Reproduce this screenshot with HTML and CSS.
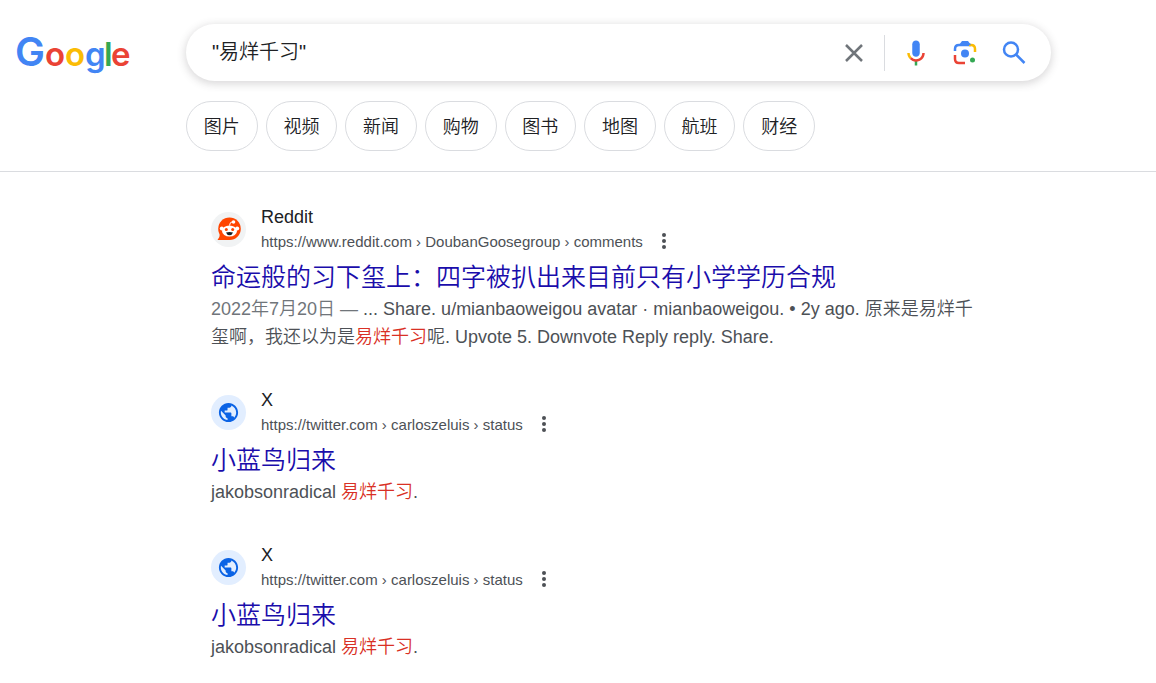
FILE: index.html
```html
<!DOCTYPE html>
<html lang="zh-CN">
<head>
<meta charset="utf-8">
<meta name="viewport" content="width=device-width, initial-scale=1">
<title>"易烊千习" - Google</title>
<link rel="stylesheet" href="styles.css">
</head>
<body>
<svg class="sprite" aria-hidden="true">
  <symbol id="globe" viewBox="0 0 24 24">
    <path fill="#0b63e5" d="M12 2C6.48 2 2 6.48 2 12s4.480 10 10 10 10-4.480 10-10S17.520 2 12 2zm-1 17.930c-3.950-.490-7-3.850-7-7.930 0-.620.080-1.210.210-1.790L9 15v1c0 1.100.900 2 2 2v1.930zm6.900-2.540c-.260-.810-1-1.390-1.900-1.390h-1v-3c0-.550-.450-1-1-1H8v-2h2c.550 0 1-.450 1-1V7h2c1.100 0 2-.900 2-2v-.410c2.930 1.190 5 4.060 5 7.410 0 2.080-.800 3.970-2.100 5.390z"/>
  </symbol>
  <symbol id="dots" viewBox="0 0 6 16">
    <g fill="#4d5156"><circle cx="3" cy="2" r="2"/><circle cx="3" cy="8" r="2"/><circle cx="3" cy="14" r="2"/></g>
  </symbol>
</svg>

<header class="header">
  <div class="topbar">
    <a class="logo" href="#" aria-label="Google">
      <svg class="logo-art" viewBox="0 0 116 60">
        <text y="43"><tspan class="logo-cap blue" x="-1">G</tspan><tspan class="red" x="29">o</tspan><tspan class="yellow" x="49">o</tspan><tspan class="blue" x="69">g</tspan><tspan class="green" x="88">l</tspan><tspan class="red" x="95">e</tspan></text>
      </svg>
    </a>
    <form class="search" role="search">
      <input class="search-input" type="text" aria-label="搜索" value="&quot;易烊千习&quot;">
      <button class="icon-button" type="button" aria-label="清除">
        <svg class="icon" viewBox="0 0 30 30"><path d="M7 7l16 16M23 7L7 23" fill="none" stroke="#70757a" stroke-width="2.500"/></svg>
      </button>
      <span class="divider"></span>
      <button class="icon-button" type="button" aria-label="语音搜索">
        <svg class="icon" viewBox="0 0 24 24">
          <path fill="#4285f4" d="M12 15c1.660 0 3-1.310 3-2.970V5.010C15 3.340 13.660 2 12 2S9 3.340 9 5.010v7.020C9 13.690 10.340 15 12 15z"/>
          <path fill="#34a853" d="M11 18.080h2V22h-2z"/>
          <path fill="#fbbc05" d="M7.050 16.870C5.780 15.580 5 13.900 5 12h2c0 1.450.560 2.420 1.470 3.380z"/>
          <path fill="#ea4335" d="M12 16.930a4.970 5.250 0 0 1-3.540-1.550l-1.410 1.490C8.310 18.140 10.060 19 11.990 19 15.860 19 19 15.870 19 12h-2c0 2.920-2.240 4.930-5 4.930z"/>
        </svg>
      </button>
      <button class="icon-button" type="button" aria-label="按图搜索">
        <svg class="icon" viewBox="0 0 30 30">
          <g fill="none" stroke-width="2.500">
            <path stroke="#4285f4" d="M5 13v-2q0-4 4-4h12"/>
            <path stroke="#fbbc05" d="M19 7h2q4 0 4 4v3"/>
            <path stroke="#ea4335" d="M5 17v4q0 4 4 4h6"/>
          </g>
          <path fill="#4285f4" d="M9 7l3-4h6l3 4z"/>
          <circle cx="15" cy="15.500" r="4" fill="#4285f4"/>
          <circle cx="22.500" cy="22" r="2.500" fill="#34a853"/>
        </svg>
      </button>
      <button class="icon-button" type="submit" aria-label="搜索">
        <svg class="icon" viewBox="0 0 30 30"><g fill="none" stroke="#4285f4" stroke-width="2.500"><circle cx="12" cy="11.500" r="7"/><path d="M17 16.500l8.500 8.500"/></g></svg>
      </button>
    </form>
  </div>
  <nav class="chips" aria-label="筛选">
    <a class="chip" href="#">图片</a>
    <a class="chip" href="#">视频</a>
    <a class="chip" href="#">新闻</a>
    <a class="chip" href="#">购物</a>
    <a class="chip" href="#">图书</a>
    <a class="chip" href="#">地图</a>
    <a class="chip" href="#">航班</a>
    <a class="chip" href="#">财经</a>
  </nav>
</header>

<main class="results">
  <article class="result">
    <div class="source">
      <span class="favicon favicon-reddit">
        <svg class="reddit-art" viewBox="0 0 24 24">
          <circle cx="12.500" cy="11.800" r="11.300" fill="#ff4500"/>
          <path fill="#ff4500" d="M3 16q0 4-2.500 7.100H13z"/>
          <circle cx="4.800" cy="11.500" r="2" fill="#fff"/><circle cx="20.200" cy="11.500" r="2" fill="#fff"/>
          <ellipse cx="12.500" cy="14" rx="7.500" ry="5.500" fill="#fff"/>
          <path d="M12.500 8.500q0-3.500 3.500-4" fill="none" stroke="#fff" stroke-width="1"/>
          <circle cx="16.500" cy="5" r="1.800" fill="#fff"/>
          <circle cx="9.300" cy="12.500" r="1.500" fill="#ff4500"/><circle cx="15.700" cy="12.500" r="1.500" fill="#ff4500"/>
          <path d="M9 15.500q3.500-1 7 0-1 2.700-3.500 2.700t-3.500-2.700z" fill="#172026"/>
        </svg>
      </span>
      <div class="source-text">
        <div class="site">Reddit</div>
        <div class="path-row">
          <cite class="path">https://www.reddit.com › DoubanGoosegroup › comments</cite>
          <button class="more" type="button" aria-label="更多"><svg class="dots"><use href="#dots"/></svg></button>
        </div>
      </div>
    </div>
    <h3 class="title"><a href="#">命运般的习下玺上：四字被扒出来目前只有小学学历合规</a></h3>
    <p class="snippet"><span class="date">2022年7月20日 — </span>... Share. u/mianbaoweigou avatar · mianbaoweigou. • 2y ago. 原来是易烊千玺啊，我还以为是<em>易烊千习</em>呢. Upvote 5. Downvote Reply reply. Share.</p>
  </article>

  <article class="result">
    <div class="source">
      <span class="favicon"><svg class="globe"><use href="#globe"/></svg></span>
      <div class="source-text">
        <div class="site">X</div>
        <div class="path-row">
          <cite class="path">https://twitter.com › carloszeluis › status</cite>
          <button class="more" type="button" aria-label="更多"><svg class="dots"><use href="#dots"/></svg></button>
        </div>
      </div>
    </div>
    <h3 class="title"><a href="#">小蓝鸟归来</a></h3>
    <p class="snippet">jakobsonradical <em>易烊千习</em>.</p>
  </article>

  <article class="result">
    <div class="source">
      <span class="favicon"><svg class="globe"><use href="#globe"/></svg></span>
      <div class="source-text">
        <div class="site">X</div>
        <div class="path-row">
          <cite class="path">https://twitter.com › carloszeluis › status</cite>
          <button class="more" type="button" aria-label="更多"><svg class="dots"><use href="#dots"/></svg></button>
        </div>
      </div>
    </div>
    <h3 class="title"><a href="#">小蓝鸟归来</a></h3>
    <p class="snippet">jakobsonradical <em>易烊千习</em>.</p>
  </article>
</main>
</body>
</html>
```
FILE: styles.css
```css
* { box-sizing: border-box; }

body {
  margin: 0;
  background: #fff;
  color: #202124;
  font-family: "Liberation Sans", "Noto Sans CJK SC", sans-serif;
  font-size: 18px;
  font-weight: 350;
}

a { color: inherit; text-decoration: none; }

button {
  padding: 0;
  border: 0;
  background: none;
  cursor: pointer;
}

.sprite { display: none; }

.header {
  padding: 24px 105px 20px 16px;
  border-bottom: 1px solid #dadce0;
}

.topbar {
  display: flex;
  align-items: center;
  height: 57px;
}

.logo { flex: none; width: 170px; }

.logo-art {
  display: block;
  width: 116px;
  height: 60px;
  overflow: visible;
  font-family: Inter, sans-serif;
  font-size: 33px;
  font-weight: 600;
}

.logo-cap { font-size: 40px; }
.blue { fill: #4285f4; }
.red { fill: #ea4335; }
.yellow { fill: #fbbc05; }
.green { fill: #34a853; }

.search {
  display: flex;
  flex: 1;
  align-items: center;
  height: 57px;
  padding: 0 22px 0 26px;
  border-radius: 29px;
  box-shadow: 0 2px 8px 1px rgba(64, 60, 67, 0.2);
}

.search-input {
  flex: 1;
  min-width: 0;
  padding: 0 0 4px;
  border: 0;
  outline: 0;
  background: none;
  color: #202124;
  font: inherit;
  font-size: 20px;
}

.icon-button { flex: none; width: 30px; height: 30px; margin-left: 19px; }
.icon { display: block; width: 30px; height: 30px; }

.divider {
  width: 1px;
  height: 36px;
  margin-left: 15px;
  background: #dadce0;
}

.divider + .icon-button { margin-left: 16px; }

.chips {
  display: flex;
  gap: 8px;
  max-width: 799px;
  margin-top: 20px;
  padding-left: 170px;
}

.chip {
  flex: 1;
  height: 50px;
  border: 1px solid #dadce0;
  border-radius: 25px;
  line-height: 50px;
  text-align: center;
  white-space: nowrap;
}

.results {
  display: flex;
  flex-direction: column;
  gap: 37px;
  max-width: 985px;
  padding: 33px 0 0 211px;
}

.source { display: flex; align-items: center; gap: 15px; }

.favicon {
  display: grid;
  place-items: center;
  width: 35px;
  height: 35px;
  border-radius: 50%;
  background: #e2eeff;
}

.favicon-reddit { background: #f1f3f4; }
.globe { width: 23px; height: 23px; }
.reddit-art { width: 24px; height: 24px; }
.site { line-height: 24px; }

.path-row {
  display: flex;
  align-items: center;
  gap: 18px;
  height: 24px;
}

.path { color: #4d5156; font-size: 15px; font-style: normal; }
.more { height: 16px; }
.dots { display: block; width: 6px; height: 16px; }

.title {
  margin: 6px 0 0;
  color: #1a0dab;
  font-size: 25px;
  font-weight: 350;
  line-height: 36px;
}

.snippet {
  margin: 0;
  color: #4d5156;
  line-height: 28px;
}

.snippet em { color: #d93025; font-style: normal; }
.date { color: #70757a; }
```
